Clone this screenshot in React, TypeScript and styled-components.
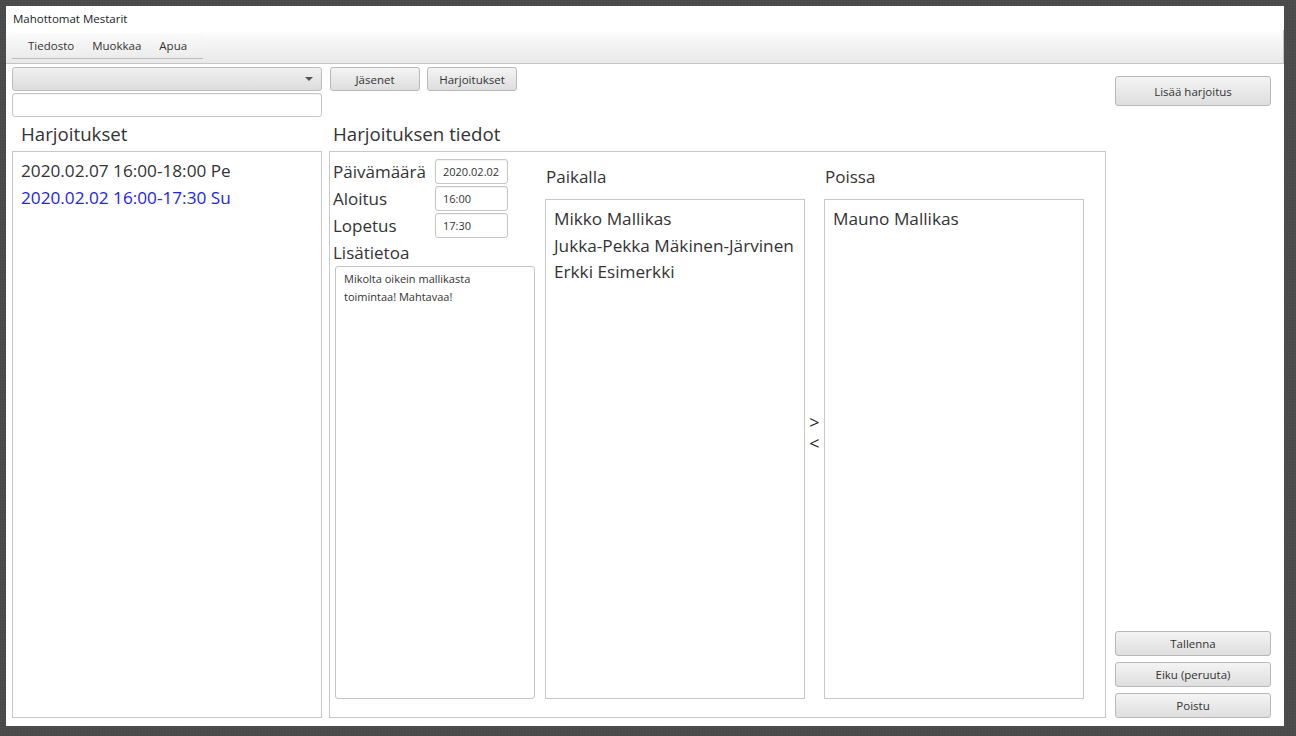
import React from "react";
import styled, { createGlobalStyle } from "styled-components";

const Global = createGlobalStyle`
  html, body { margin: 0; padding: 0; }
  body {
    width: 1296px; height: 736px; overflow: hidden;
    background-color: #4a4a4a;
    background-image: radial-gradient(#555 0.6px, transparent 0.6px);
    background-size: 3px 3px;
    font-family: "Open Sans", "Noto Sans", sans-serif;
    color: #333;
  }
  * { box-sizing: border-box; }
`;

const Screen = styled.div`
  padding: 6px 12px 10px 6px;
  width: 1296px;
  height: 736px;
`;

const Window = styled.div`
  width: 1278px;
  height: 720px;
  background: #fff;
  display: flex;
  flex-direction: column;
`;

const TitleBar = styled.div`
  height: 24px;
  display: flex;
  align-items: center;
  padding-left: 7px;
  font-size: 11.5px;
  color: #222;
`;

const Header = styled.div`
  height: 34px;
  background: linear-gradient(#ffffff 0%, #f4f4f4 40%, #e9e9e9 100%);
  border-bottom: 1px solid #c4c4c4;
  border-right: 1px solid #c4c4c4;
  padding: 3px 0 0 6px;
`;

const MenuBar = styled.div`
  display: inline-flex;
  height: 25px;
  width: 191px;
  align-items: center;
  padding-left: 16px;
  gap: 18px;
  background: linear-gradient(#fafafa, #ececec);
  border-bottom: 1px solid #bdbdbd;
  font-size: 11.5px;
`;

const MenuItem = styled.span`
  color: #333;
`;

const Main = styled.div`
  flex: 1;
  display: grid;
  grid-template-columns: 310px 777px 158px;
  column-gap: 7px;
  padding: 3px 0 8px 6px;
`;

const Column = styled.div`
  display: flex;
  flex-direction: column;
  min-height: 0;
`;

const RightColumn = styled(Column)`
  padding-left: 2px;
  padding-top: 9px;
  justify-content: space-between;
`;

const Combo = styled.div`
  height: 24px;
  border: 1px solid #bcbcbc;
  border-radius: 3px;
  background: linear-gradient(#f1f1f1, #dcdcdc);
  display: flex;
  align-items: center;
  justify-content: flex-end;
  padding-right: 8px;
`;

const ComboArrow = styled.span`
  width: 0;
  height: 0;
  border-left: 4px solid transparent;
  border-right: 4px solid transparent;
  border-top: 4px solid #555;
`;

const TextField = styled.div<{ $w?: number }>`
  height: ${(p) => (p.$w ? 25 : 24)}px;
  width: ${(p) => (p.$w ? `${p.$w}px` : "auto")};
  margin-top: ${(p) => (p.$w ? 0 : 2)}px;
  border: 1px solid #c4c4c4;
  border-radius: 3px;
  background: #fff;
  box-shadow: inset 0 1px 1px rgba(0, 0, 0, 0.05);
  display: flex;
  align-items: center;
  padding-left: 7px;
  font-size: 11px;
  color: #333;
`;

const Heading = styled.div<{ $top?: number; $left?: number }>`
  height: 34px;
  margin-top: ${(p) => p.$top ?? 0}px;
  display: flex;
  align-items: center;
  padding-left: ${(p) => p.$left ?? 9}px;
  padding-bottom: 1px;
  font-size: 18.7px;
  color: #333;
`;

const ListBox = styled.div<{ $h: number; $pad?: number }>`
  height: ${(p) => p.$h}px;
  border: 1px solid #c8c8c8;
  background: #fff;
  padding: ${(p) => p.$pad ?? 5}px 0 0 8px;
`;

const ListItem = styled.div<{ $blue?: boolean; $lh?: number }>`
  font-size: 17.2px;
  line-height: ${(p) => p.$lh ?? 27}px;
  color: ${(p) => (p.$blue ? "#2323f0" : "#333")};
  white-space: nowrap;
`;

const ButtonRow = styled.div`
  display: flex;
  gap: 7px;
  padding-left: 1px;
`;

const Button = styled.button<{ $w?: number; $h?: number }>`
  width: ${(p) => (p.$w ? `${p.$w}px` : "100%")};
  height: ${(p) => p.$h ?? 24}px;
  border: 1px solid #b8b8b8;
  border-radius: 3px;
  background: linear-gradient(#f4f4f4, #dedede);
  font-family: "Open Sans", "Noto Sans", sans-serif;
  font-size: 11.5px;
  color: #333;
  padding: 0;
  cursor: default;
`;

const BottomButtons = styled.div`
  display: flex;
  flex-direction: column;
  gap: 6px;
`;

const Panel = styled.div`
  height: 567px;
  border: 1px solid #c8c8c8;
  display: flex;
`;

const Form = styled.div`
  width: 215px;
  padding: 7px 0 0 3px;
  display: flex;
  flex-direction: column;
`;

const FieldGrid = styled.div`
  display: grid;
  grid-template-columns: 102px 73px;
  grid-auto-rows: 25px;
  row-gap: 2px;
  align-items: center;
`;

const FieldLabel = styled.div`
  font-size: 17px;
  color: #333;
  line-height: 25px;
  white-space: nowrap;
`;

const NoteLabel = styled(FieldLabel)`
  margin-top: 2px;
`;

const TextArea = styled.div`
  margin: 1px 0 0 2px;
  width: 200px;
  height: 433px;
  border: 1px solid #c4c4c4;
  border-radius: 3px;
  padding: 3px 8px;
  font-size: 11px;
  line-height: 18px;
  color: #333;
`;

const AttendCol = styled.div`
  width: 260px;
  padding-top: 13px;
  display: flex;
  flex-direction: column;
`;

const AttendLabel = styled.div`
  height: 24px;
  line-height: 24px;
  font-size: 17px;
  padding-left: 1px;
  margin-bottom: 10px;
  color: #333;
`;

const Arrows = styled.div`
  width: 19px;
  padding-top: 260px;
  display: flex;
  flex-direction: column;
  align-items: center;
  gap: 1px;
`;

const ArrowGlyph = styled.span`
  display: block;
  height: 20px;
  font-size: 18px;
  line-height: 20px;
  color: #222;
`;

export default function App() {
  return (
    <>
      <Global />
      <Screen>
        <Window>
          <TitleBar>Mahottomat Mestarit</TitleBar>
          <Header>
            <MenuBar>
              <MenuItem>Tiedosto</MenuItem>
              <MenuItem>Muokkaa</MenuItem>
              <MenuItem>Apua</MenuItem>
            </MenuBar>
          </Header>
          <Main>
            <Column>
              <Combo>
                <ComboArrow />
              </Combo>
              <TextField />
              <Heading>Harjoitukset</Heading>
              <ListBox $h={567}>
                <ListItem>2020.02.07 16:00-18:00 Pe</ListItem>
                <ListItem $blue>2020.02.02 16:00-17:30 Su</ListItem>
              </ListBox>
            </Column>
            <Column>
              <ButtonRow>
                <Button $w={90}>Jäsenet</Button>
                <Button $w={90}>Harjoitukset</Button>
              </ButtonRow>
              <Heading $top={26} $left={4}>
                Harjoituksen tiedot
              </Heading>
              <Panel>
                <Form>
                  <FieldGrid>
                    <FieldLabel>Päivämäärä</FieldLabel>
                    <TextField $w={73}>2020.02.02</TextField>
                    <FieldLabel>Aloitus</FieldLabel>
                    <TextField $w={73}>16:00</TextField>
                    <FieldLabel>Lopetus</FieldLabel>
                    <TextField $w={73}>17:30</TextField>
                  </FieldGrid>
                  <NoteLabel>Lisätietoa</NoteLabel>
                  <TextArea>
                    Mikolta oikein mallikasta
                    <br />
                    toimintaa! Mahtavaa!
                  </TextArea>
                </Form>
                <AttendCol>
                  <AttendLabel>Paikalla</AttendLabel>
                  <ListBox $h={500} $pad={6}>
                    <ListItem $lh={26.5}>Mikko Mallikas</ListItem>
                    <ListItem $lh={26.5}>Jukka-Pekka Mäkinen-Järvinen</ListItem>
                    <ListItem $lh={26.5}>Erkki Esimerkki</ListItem>
                  </ListBox>
                </AttendCol>
                <Arrows>
                  <ArrowGlyph>&gt;</ArrowGlyph>
                  <ArrowGlyph>&lt;</ArrowGlyph>
                </Arrows>
                <AttendCol>
                  <AttendLabel>Poissa</AttendLabel>
                  <ListBox $h={500} $pad={6}>
                    <ListItem $lh={26.5}>Mauno Mallikas</ListItem>
                  </ListBox>
                </AttendCol>
              </Panel>
            </Column>
            <RightColumn>
              <Button $h={30}>Lisää harjoitus</Button>
              <BottomButtons>
                <Button $h={25}>Tallenna</Button>
                <Button $h={25}>Eiku (peruuta)</Button>
                <Button $h={25}>Poistu</Button>
              </BottomButtons>
            </RightColumn>
          </Main>
        </Window>
      </Screen>
    </>
  );
}
